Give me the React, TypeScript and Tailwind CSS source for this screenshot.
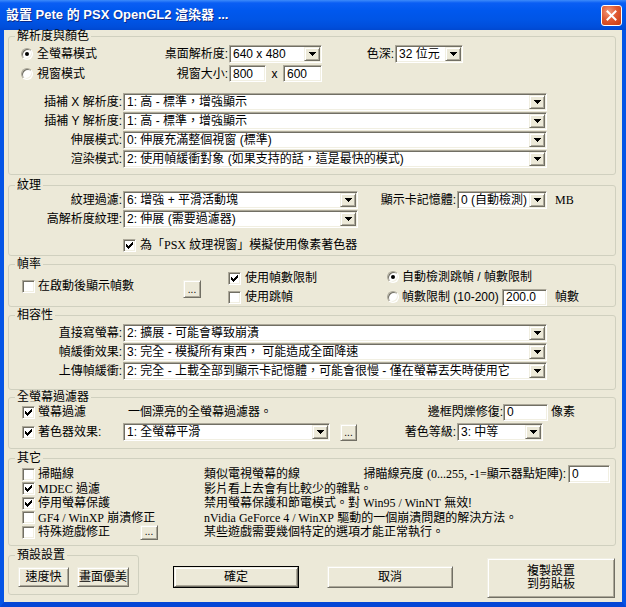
import React from "react";

const sunken =
  "border border-t-[#ACA899] border-l-[#ACA899] border-r-white border-b-white shadow-[inset_1px_1px_0_#716F64,inset_-1px_-1px_0_#F1EFE2] bg-white";
const raised =
  "border border-t-[#F1EFE2] border-l-[#F1EFE2] border-r-[#716F64] border-b-[#716F64] shadow-[inset_1px_1px_0_#FFFFFF,inset_-1px_-1px_0_#ACA899] bg-[#ECE9D8]";

const Serif = ({ children }: { children: React.ReactNode }) => (
  <span className="font-['Liberation_Serif','Noto_Sans_CJK_TC',serif]">{children}</span>
);

function Arrow() {
  return (
    <div className={`${raised} w-[16px] h-full shrink-0 flex items-center justify-center`}>
      <svg width="7" height="4" viewBox="0 0 7 4" shapeRendering="crispEdges">
        <path d="M0 0h7v1H0zM1 1h5v1H1zM2 2h3v1H2zM3 3h1v1H3z" fill="#000" />
      </svg>
    </div>
  );
}

function Combo({ value, w, className = "" }: { value: React.ReactNode; w: string; className?: string }) {
  return (
    <div className={`${sunken} ${w} h-[18px] p-[1px] flex shrink-0 ${className}`}>
      <div className="flex-1 min-w-0 pl-[2px] flex items-center whitespace-nowrap overflow-hidden">{value}</div>
      <Arrow />
    </div>
  );
}

function TextBox({ value, w, className = "" }: { value: string; w: string; className?: string }) {
  return (
    <div className={`${sunken} ${w} h-[17px] pl-[3px] flex items-center shrink-0 ${className}`}>{value}</div>
  );
}

function Check({ checked }: { checked?: boolean }) {
  return (
    <div className={`${sunken} w-[13px] h-[13px] shrink-0 flex items-center justify-center`}>
      {checked && (
        <svg width="7" height="7" viewBox="0 0 7 7" shapeRendering="crispEdges">
          <path
            d="M6 0h1v1H6zM5 1h2v1H5zM0 2h1v1H0zM4 2h3v1H4zM0 3h2v1H0zM3 3h3v1H3zM0 4h5v1H0zM1 5h3v1H1zM2 6h1v1H2z"
            fill="#000"
          />
        </svg>
      )}
    </div>
  );
}

function Radio({ checked }: { checked?: boolean }) {
  return (
    <div className="relative w-[12px] h-[12px] shrink-0 rounded-full border border-t-[#ACA899] border-l-[#ACA899] border-r-white border-b-white bg-white shadow-[inset_1px_1px_0_#716F64,inset_-1px_-1px_0_#F1EFE2]">
      {checked && <div className="absolute left-[3px] top-[3px] w-[4px] h-[4px] rounded-full bg-black" />}
    </div>
  );
}

function Btn({ children, className = "" }: { children: React.ReactNode; className?: string }) {
  return <div className={`${raised} shrink-0 flex items-center justify-center ${className}`}>{children}</div>;
}

function Dots({ className = "" }: { className?: string }) {
  return (
    <Btn className={`items-end pb-[2px] ${className}`}>
      <span className="text-[10px] leading-[10px]">...</span>
    </Btn>
  );
}

function Group({ label, className = "", children }: { label: string; className?: string; children?: React.ReactNode }) {
  return (
    <fieldset className={`border border-[#D0D0BF] rounded-[3px] min-w-0 shrink-0 ${className}`}>
      <legend className="ml-[6px] px-[2px] leading-[12px]">{label}</legend>
      {children}
    </fieldset>
  );
}

function LabeledCombo({ label, value, labelW = "w-[113px]", comboW = "w-[424px]" }: { label: string; value: React.ReactNode; labelW?: string; comboW?: string }) {
  return (
    <div className="flex items-center h-[18px]">
      <div className={`${labelW} text-right whitespace-nowrap`}>{label}</div>
      <Combo value={value} w={comboW} className="ml-[1px]" />
    </div>
  );
}

export default function App() {
  return (
    <div className="w-[626px] h-[607px] flex flex-col font-['Liberation_Sans','Noto_Sans_CJK_TC',sans-serif] text-[12px] leading-[14px] text-black select-none">
      {/* Title bar */}
      <div className="h-[30px] shrink-0 flex items-center pl-[6px] pr-[4px] bg-[linear-gradient(to_bottom,#3D8BFA_0%,#0A5EF4_10%,#0058EE_35%,#0055E6_65%,#004EDB_90%,#0048D0_100%)]">
        <span className="text-white font-bold text-[13px] leading-[16px] [text-shadow:1px_1px_0_#0B2A8A] whitespace-nowrap">
          設置 Pete 的 PSX OpenGL2 渲染器 ...
        </span>
        <div className="ml-auto w-[21px] h-[21px] rounded-[3px] border border-white bg-[radial-gradient(circle_at_35%_30%,#F29A7C_0%,#E05A32_45%,#C5380E_100%)] flex items-center justify-center">
          <svg width="11" height="11" viewBox="0 0 11 11">
            <path d="M1.5 1.5L9.5 9.5M9.5 1.5L1.5 9.5" stroke="#fff" strokeWidth="2" strokeLinecap="square" />
          </svg>
        </div>
      </div>

      {/* Body */}
      <div className="flex-1 flex flex-col bg-[#ECE9D8] border-l-[4px] border-r-[4px] border-b-[5px] border-l-[#0454E6] border-r-[#0454E6] border-b-[#0446D6] pl-[4px] pr-[6px]">
        {/* 解析度與顏色 */}
        <Group label="解析度與顏色" className="h-[145px]">
          <div className="mt-[2px] h-[19px] flex items-center">
            <div className="w-[219px] flex items-center justify-between">
              <div className="flex items-center gap-[4px] pl-[12px]">
                <Radio checked />
                <span>全螢幕模式</span>
              </div>
              <span>桌面解析度:</span>
            </div>
            <Combo value="640 x 480" w="w-[93px]" className="ml-[1px]" />
            <div className="w-[72px] text-right">色深:</div>
            <Combo value="32 位元" w="w-[68px]" className="ml-[1px]" />
          </div>
          <div className="mt-[1px] h-[19px] flex items-center">
            <div className="w-[219px] flex items-center justify-between">
              <div className="flex items-center gap-[4px] pl-[12px]">
                <Radio />
                <span>視窗模式</span>
              </div>
              <span>視窗大小:</span>
            </div>
            <TextBox value="800" w="w-[37px]" className="ml-[1px]" />
            <span className="w-[17px] text-center">x</span>
            <TextBox value="600" w="w-[39px]" />
          </div>
          <div className="mt-[10px] flex flex-col gap-[1px]">
            <LabeledCombo label="插補 X 解析度:" value="1: 高 - 標準，增強顯示" />
            <LabeledCombo label="插補 Y 解析度:" value="1: 高 - 標準，增強顯示" />
            <LabeledCombo label="伸展模式:" value="0: 伸展充滿整個視窗 (標準)" />
            <LabeledCombo label="渲染模式:" value="2: 使用幀緩衝對象 (如果支持的話，這是最快的模式)" />
          </div>
        </Group>

        {/* 紋理 */}
        <Group label="紋理" className="mt-[4px] h-[77px]">
          <div className="flex items-center h-[18px]">
            <div className="w-[113px] text-right">紋理過濾:</div>
            <Combo value="6: 增強 + 平滑活動塊" w="w-[235px]" className="ml-[1px]" />
            <div className="w-[98px] text-right">顯示卡記憶體:</div>
            <Combo value="0 (自動檢測)" w="w-[90px]" className="ml-[1px]" />
            <span className="ml-[8px]">
              <Serif>MB</Serif>
            </span>
          </div>
          <div className="mt-[1px] flex items-center h-[18px]">
            <div className="w-[113px] text-right">高解析度紋理:</div>
            <Combo value="2: 伸展 (需要過濾器)" w="w-[235px]" className="ml-[1px]" />
          </div>
          <div className="mt-[10px] h-[14px] flex items-center gap-[4px] pl-[114px]">
            <Check checked />
            <span>
              為「<Serif>PSX</Serif> 紋理視窗」模擬使用像素著色器
            </span>
          </div>
        </Group>

        {/* 幀率 */}
        <Group label="幀率" className="mt-[2px] h-[49px]">
          <div className="flex items-start">
            <div className="w-[174px] pl-[13px] mt-[9px] h-[14px] flex items-center gap-[3px]">
              <Check />
              <span>在啟動後顯示幀數</span>
            </div>
            <Dots className="w-[18px] h-[18px] mt-[10px]" />
            <div className="ml-[27px] w-[159px] flex flex-col">
              <div className="mt-[1px] h-[14px] flex items-center gap-[4px]">
                <Check checked />
                <span>使用幀數限制</span>
              </div>
              <div className="mt-[5px] h-[14px] flex items-center gap-[4px]">
                <Check />
                <span>使用跳幀</span>
              </div>
            </div>
            <div className="flex flex-col">
              <div className="h-[14px] flex items-center gap-[3px]">
                <Radio checked />
                <span>自動檢測跳幀 / 幀數限制</span>
              </div>
              <div className="mt-[4px] h-[18px] flex items-center">
                <Radio />
                <span className="ml-[3px] w-[100px] whitespace-nowrap">幀數限制 (10-200) :</span>
                <TextBox value="200.0" w="w-[45px]" />
                <span className="ml-[8px]">幀數</span>
              </div>
            </div>
          </div>
        </Group>

        {/* 相容性 */}
        <Group label="相容性" className="mt-[2px] h-[81px]">
          <div className="mt-[3px] flex flex-col gap-[1px]">
            <LabeledCombo label="直接寫螢幕:" value="2: 擴展 - 可能會導致崩潰" />
            <LabeledCombo label="幀緩衝效果:" value="3: 完全 - 模擬所有東西， 可能造成全面降速" />
            <LabeledCombo label="上傳幀緩衝:" value="2: 完全 - 上載全部到顯示卡記憶體，可能會很慢 - 僅在螢幕丟失時使用它" />
          </div>
        </Group>

        {/* 全螢幕過濾器 */}
        <Group label="全螢幕過濾器" className="mt-[1px] h-[58px]">
          <div className="h-[18px] flex items-center">
            <div className="w-[119px] pl-[13px] flex items-center gap-[3px]">
              <Check checked />
              <span>螢幕過濾</span>
            </div>
            <div className="w-[375px] flex items-center justify-between">
              <span>一個漂亮的全螢幕過濾器。</span>
              <span>邊框閃爍修復:</span>
            </div>
            <TextBox value="0" w="w-[45px]" />
            <span className="ml-[3px]">像素</span>
          </div>
          <div className="mt-[2px] h-[18px] flex items-center">
            <div className="w-[114px] pl-[13px] flex items-center gap-[3px]">
              <Check checked />
              <span>著色器效果:</span>
            </div>
            <Combo value="1: 全螢幕平滑" w="w-[207px]" />
            <Dots className="ml-[10px] w-[17px] h-[17px]" />
            <div className="w-[99px] text-right">著色等級:</div>
            <Combo value="3: 中等" w="w-[86px]" className="ml-[1px]" />
          </div>
        </Group>

        {/* 其它 */}
        <Group label="其它" className="mt-[3px] h-[94px]">
          <div className="mt-[3px] flex flex-col">
            <div className="h-[14.5px] flex items-center">
              <div className="w-[195px] pl-[13px] flex items-center gap-[3px]">
                <Check />
                <span>掃瞄線</span>
              </div>
              <span>類似電視螢幕的線</span>
              <span className="ml-auto">
                掃瞄線亮度 <Serif>(0...255, -1=</Serif>顯示器點矩陣):
              </span>
              <TextBox value="0" w="w-[42px]" className="ml-[2px] mr-[5px] !h-[18px] -my-[2px]" />
            </div>
            <div className="h-[14.5px] flex items-center">
              <div className="w-[195px] pl-[13px] flex items-center gap-[3px]">
                <Check checked />
                <span>
                  <Serif>MDEC</Serif> 過濾
                </span>
              </div>
              <span>影片看上去會有比較少的雜點。</span>
            </div>
            <div className="h-[14.5px] flex items-center">
              <div className="w-[195px] pl-[13px] flex items-center gap-[3px]">
                <Check checked />
                <span>停用螢幕保護</span>
              </div>
              <span>
                禁用螢幕保護和節電模式。對 <Serif>Win95 / WinNT</Serif> 無效!
              </span>
            </div>
            <div className="h-[14.5px] flex items-center">
              <div className="w-[195px] pl-[13px] flex items-center gap-[3px]">
                <Check />
                <span>
                  <Serif>GF4 / WinXP</Serif> 崩潰修正
                </span>
              </div>
              <span>
                <Serif>nVidia GeForce 4 / WinXP</Serif> 驅動的一個崩潰問題的解決方法。
              </span>
            </div>
            <div className="h-[14.5px] flex items-center">
              <div className="w-[195px] pl-[13px] flex items-center gap-[3px]">
                <Check />
                <span className="w-[99px]">特殊遊戲修正</span>
                <Dots className="w-[18px] h-[15px] -my-[1px]" />
              </div>
              <span>某些遊戲需要幾個特定的選項才能正常執行。</span>
            </div>
          </div>
        </Group>

        {/* Bottom row */}
        <div className="mt-[3px] flex items-start">
          <Group label="預設設置" className="w-[131px] h-[46px]">
            <div className="mt-[6px] pl-[9px] flex">
              <Btn className="w-[51px] h-[20px]">速度快</Btn>
              <Btn className="ml-[8px] w-[52px] h-[20px]">畫面優美</Btn>
            </div>
          </Group>
          <div className="ml-[34px] mt-[17px] w-[126px] h-[22px] border border-black shrink-0">
            <Btn className="w-full h-full">確定</Btn>
          </div>
          <Btn className="ml-[28px] mt-[17px] w-[126px] h-[22px]">取消</Btn>
          <Btn className="ml-[34px] mt-[9px] w-[128px] h-[40px] flex-col leading-[13px]">
            <span>複製設置</span>
            <span>到剪貼板</span>
          </Btn>
        </div>
      </div>
    </div>
  );
}
